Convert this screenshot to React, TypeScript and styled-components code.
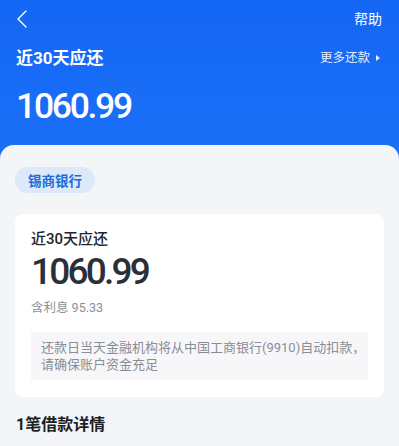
import React from 'react';
import styled, { createGlobalStyle } from 'styled-components';

const GlobalStyle = createGlobalStyle`
  html, body {
    margin: 0;
    padding: 0;
    background: #1769f5;
  }
  body {
    font-family: Roboto, "Noto Sans CJK SC", sans-serif;
    -webkit-font-smoothing: antialiased;
  }
`;

const Page = styled.div`
  width: 399px;
  height: 446px;
  overflow: hidden;
  background: linear-gradient(180deg, #1466f4 0%, #1b70f7 160px);
`;

const Header = styled.div`
  padding: 0 16px 11px;
  color: #fff;
`;

const TopBar = styled.div`
  height: 38px;
  display: flex;
  align-items: center;
  justify-content: space-between;
`;

const HelpLink = styled.span`
  font-size: 14px;
  line-height: 20px;
  margin-right: 1px;
`;

const TitleRow = styled.div`
  height: 40px;
  display: flex;
  align-items: center;
  justify-content: space-between;
`;

const HeaderTitle = styled.h1`
  margin: 0;
  font-size: 17px;
  font-weight: 700;
  line-height: 22px;
`;

const MoreLink = styled.span`
  display: flex;
  align-items: center;
  gap: 6px;
  font-size: 12.5px;
  line-height: 18px;
  color: rgba(255, 255, 255, 0.92);
  margin-right: 3px;
`;

const Caret = styled.span`
  width: 0;
  height: 0;
  border-top: 3.5px solid transparent;
  border-bottom: 3.5px solid transparent;
  border-left: 4px solid rgba(255, 255, 255, 0.9);
`;

const Amount = styled.div<{ $dark?: boolean }>`
  font-family: Roboto, sans-serif;
  font-weight: 500;
  letter-spacing: ${({ $dark }) => ($dark ? '-2.8px' : '-2.3px')};
  font-size: ${({ $dark }) => ($dark ? '37px' : '35.5px')};
  line-height: ${({ $dark }) => ($dark ? '40px' : '56px')};
  color: ${({ $dark }) => ($dark ? '#2a2f3a' : '#fff')};
`;

const Panel = styled.div`
  background: #f4f5f7;
  border-radius: 14px 14px 0 0;
  padding: 22px 15px 20px;
  min-height: 300px;
`;

const Tag = styled.span`
  display: inline-flex;
  align-items: center;
  height: 26px;
  padding: 0 13px;
  border-radius: 13px;
  background: #dce9f9;
  color: #1e6bd6;
  font-size: 13.5px;
  font-weight: 600;
`;

const Card = styled.div`
  margin-top: 21px;
  background: #fff;
  border-radius: 8px;
  padding: 15px 16px 17px;
`;

const CardTitle = styled.div`
  font-size: 15px;
  line-height: 20px;
  font-weight: 500;
  color: #22252b;
`;

const CardAmount = styled(Amount)`
  margin-top: 3px;
`;

const Interest = styled.div`
  margin-top: 7px;
  font-size: 12.5px;
  line-height: 18px;
  color: #8b8f97;
`;

const Notice = styled.div`
  margin-top: 15px;
  background: #f7f7f9;
  padding: 7px 10px;
  font-size: 13px;
  line-height: 17px;
  color: #898d95;
`;

const NoticeLine = styled.div`
  white-space: nowrap;
`;

const SectionTitle = styled.h2`
  margin: 17px 0 0 1px;
  font-size: 16px;
  line-height: 22px;
  font-weight: 700;
  color: #1c1f26;
`;

const BackIcon = () => (
  <svg width="12" height="18" viewBox="0 0 12 18" fill="none">
    <path d="M10 1 L2 9 L10 17" stroke="#fff" strokeWidth="1.4" strokeLinecap="round" strokeLinejoin="round" />
  </svg>
);

export default function App() {
  return (
    <Page>
      <GlobalStyle />
      <Header>
        <TopBar>
          <BackIcon />
          <HelpLink>帮助</HelpLink>
        </TopBar>
        <TitleRow>
          <HeaderTitle>近30天应还</HeaderTitle>
          <MoreLink>
            更多还款
            <Caret />
          </MoreLink>
        </TitleRow>
        <Amount>1060.99</Amount>
      </Header>
      <Panel>
        <Tag>锡商银行</Tag>
        <Card>
          <CardTitle>近30天应还</CardTitle>
          <CardAmount $dark>1060.99</CardAmount>
          <Interest>含利息 95.33</Interest>
          <Notice>
            <NoticeLine>还款日当天金融机构将从中国工商银行(9910)自动扣款，</NoticeLine>
            <NoticeLine>请确保账户资金充足</NoticeLine>
          </Notice>
        </Card>
        <SectionTitle>1笔借款详情</SectionTitle>
      </Panel>
    </Page>
  );
}
